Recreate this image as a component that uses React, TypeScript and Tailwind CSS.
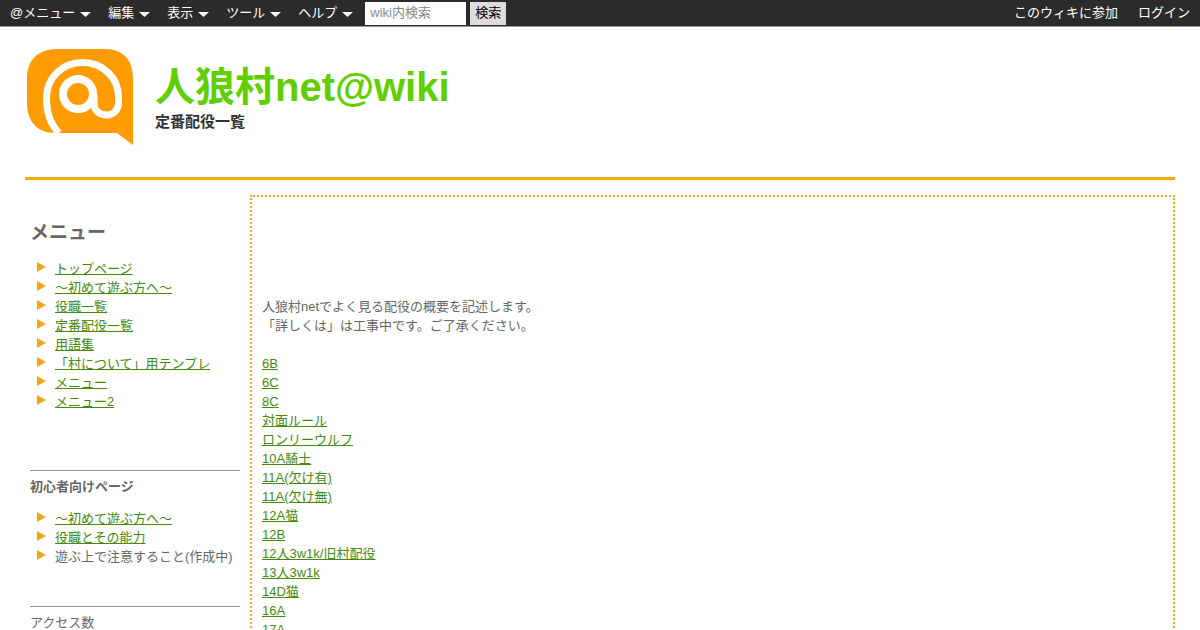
const font = "font-['Liberation_Sans','Noto_Sans_CJK_JP',sans-serif]";

const toolbarMenus = [
  { label: "@メニュー", cls: "mr-[17px]" },
  { label: "編集", cls: "mr-[17px]" },
  { label: "表示", cls: "mr-[17px]" },
  { label: "ツール", cls: "mr-[17px]" },
  { label: "ヘルプ", cls: "mr-[12px]" },
];

const mainMenu = [
  "トップページ",
  "～初めて遊ぶ方へ～",
  "役職一覧",
  "定番配役一覧",
  "用語集",
  "「村について」用テンプレ",
  "メニュー",
  "メニュー2",
];

const pageLinks = [
  "6B",
  "6C",
  "8C",
  "対面ルール",
  "ロンリーウルフ",
  "10A騎士",
  "11A(欠け有)",
  "11A(欠け無)",
  "12A猫",
  "12B",
  "12人3w1k/旧村配役",
  "13人3w1k",
  "14D猫",
  "16A",
  "17A",
];

function Caret() {
  return (
    <svg width="11" height="5" viewBox="0 0 11 5" className="ml-[5px] mt-[3px]">
      <path d="M0 0H11L5.5 5Z" fill="#fff" />
    </svg>
  );
}

function Logo() {
  return (
    <svg width="106" height="96" viewBox="0 0 106 96" className="shrink-0">
      <path
        d="M30 0H78C96 0 106 11 106 29V96L90 84H28C10 84 0 72 0 54V30C0 11 11 0 30 0Z"
        fill="#ff9c05"
      />
      <path
        d="M32 84C24 76 19.5 63 19.5 49C19.5 29 35 13.5 55.5 13.5C76 13.5 91.5 29 91.5 48V54C91.5 61 86 66 80 66C73 66 67 62 67 54V45"
        fill="none"
        stroke="#fff"
        strokeWidth="7"
      />
      <circle cx="51" cy="45" r="15" fill="none" stroke="#fff" strokeWidth="8" />
    </svg>
  );
}

function MenuItem({ text, link = true }: { text: string; link?: boolean }) {
  return (
    <li className="flex h-[19px] items-center">
      <svg width="9" height="10" viewBox="0 0 9 10" className="mb-[4px] ml-[7px] mr-[9px] shrink-0">
        <path d="M0 0L9 5L0 10Z" fill="#f8a413" />
      </svg>
      {link ? <a className="text-[#458a0e] underline">{text}</a> : <span>{text}</span>}
    </li>
  );
}

export default function App() {
  return (
    <div className={`h-[630px] overflow-hidden bg-white text-[13px] leading-[19px] text-[#666] ${font}`}>
      {/* Toolbar */}
      <div className="flex h-[27px] items-start justify-between border-b border-[#999] bg-[#2b2b2b] text-white">
        <div className="flex h-[26px] items-center pl-[10px]">
          {toolbarMenus.map((m) => (
            <div key={m.label} className={`flex items-center ${m.cls}`}>
              <span className="mb-[2px]">{m.label}</span>
              <Caret />
            </div>
          ))}
          <div className="flex h-[23px] w-[101px] items-center bg-white pb-[1px] pl-[5px] text-[#888]">wiki内検索</div>
          <div className="ml-[4px] flex h-[23px] w-[36px] items-center justify-center bg-[#ddd] pb-[1px] text-black">検索</div>
        </div>
        <div className="flex h-[26px] items-center gap-[20px] pb-[2px] pr-[10px]">
          <span>このウィキに参加</span>
          <span>ログイン</span>
        </div>
      </div>

      {/* Header */}
      <div className="mx-[25px] flex h-[153px] border-b-[3px] border-[#f5a80f] pl-[2px] pt-[22px]">
        <Logo />
        <div className="ml-[22px] pt-[13px]">
          <h1 className="text-[40px] font-bold leading-[50px] text-[#5fcf00]">人狼村net@wiki</h1>
          <p className="text-[15px] font-bold leading-[20px] text-[#333]">定番配役一覧</p>
        </div>
      </div>

      {/* Body */}
      <div className="mx-[25px] mt-[15px] flex">
        <aside className="w-[225px] shrink-0 pl-[5px] pr-[10px]">
          <h2 className="mt-[24px] text-[19px] font-bold leading-[28px]">メニュー</h2>
          <ul className="mt-[12px]">
            {mainMenu.map((t) => (
              <MenuItem key={t} text={t} />
            ))}
          </ul>
          <div className="mt-[59px] border-t border-[#999] pt-[6px]">
            <h3 className="font-bold">初心者向けページ</h3>
            <ul className="mt-[13px]">
              <MenuItem text="～初めて遊ぶ方へ～" />
              <MenuItem text="役職とその能力" />
              <MenuItem text="遊ぶ上で注意すること(作成中)" link={false} />
            </ul>
          </div>
          <div className="mt-[40px] border-t border-[#999] pt-[6px]">アクセス数</div>
        </aside>

        <main className="h-[600px] flex-1 border-2 border-dotted border-[#e8ae1a] px-[10px] pt-[100px]">
          <p>人狼村netでよく見る配役の概要を記述します。</p>
          <p>「詳しくは」は工事中です。ご了承ください。</p>
          <div className="mt-[19px] flex flex-col items-start">
            {pageLinks.map((t) => (
              <a key={t} className="text-[#458a0e] underline">
                {t}
              </a>
            ))}
          </div>
        </main>
      </div>
    </div>
  );
}
